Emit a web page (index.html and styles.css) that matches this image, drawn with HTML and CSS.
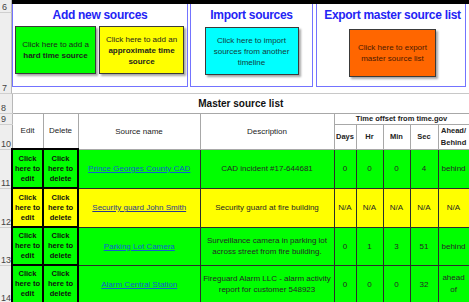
FILE: index.html
```html
<!DOCTYPE html>
<html lang="en">
<head>
  <meta charset="UTF-8">
  <title>Master source list</title>
  <link rel="stylesheet" href="styles.css">
</head>
<body>

<!-- top block: the three button panels -->
<div class="top">
  <div class="rh-col">
    <div class="rh-cell r6">6</div>
    <div class="rh-cell r7">7</div>
  </div>
  <div class="top-main">
    <div class="black-bar"></div>
    <div class="panels">
      <div class="panel p-add">
        <div class="panel-title">Add new sources</div>
        <div class="btn-row">
          <div class="shape green">Click here to add a<br><b>hard time source</b></div>
          <div class="shape yellow">Click here to add an<br><b>approximate time<br>source</b></div>
        </div>
      </div>
      <div class="panel p-imp">
        <div class="panel-title">Import sources</div>
        <div class="shape cyan">Click here to import<br>sources from another<br>timeline</div>
      </div>
      <div class="panel p-exp">
        <div class="panel-title">Export master source list</div>
        <div class="shape orange">Click here to export<br>master source list</div>
      </div>
    </div>
  </div>
</div>

<!-- master source list -->
<table class="sheet">
  <colgroup>
    <col class="c-rh">
    <col class="c-edit">
    <col class="c-del">
    <col class="c-name">
    <col class="c-desc">
    <col class="c-days">
    <col class="c-hr">
    <col class="c-min">
    <col class="c-sec">
    <col class="c-ahead">
  </colgroup>
  <tr class="r8">
    <td class="rh">8</td>
    <td colspan="9" class="list-title">Master source list</td>
  </tr>
  <tr class="r9">
    <td class="rh">9</td>
    <td rowspan="2" class="hd">Edit</td>
    <td rowspan="2" class="hd">Delete</td>
    <td rowspan="2" class="hd">Source name</td>
    <td rowspan="2" class="hd">Description</td>
    <td colspan="5" class="hd hd-b">Time offset from time.gov</td>
  </tr>
  <tr class="r10">
    <td class="rh">10</td>
    <td class="hd hd-b">Days</td>
    <td class="hd hd-b">Hr</td>
    <td class="hd hd-b">Min</td>
    <td class="hd hd-b">Sec</td>
    <td class="hd hd-b ahead">Ahead/<br>Behind</td>
  </tr>
  <tr class="row-a green">
    <td class="rh">11</td>
    <td class="act">Click<br>here to<br>edit</td>
    <td class="act">Click<br>here to<br>delete</td>
    <td><a href="#">Prince Georges County CAD</a></td>
    <td class="desc">CAD incident #17-644681</td>
    <td>0</td><td>0</td><td>0</td><td>4</td><td>behind</td>
  </tr>
  <tr class="row-a yellow">
    <td class="rh">12</td>
    <td class="act">Click<br>here to<br>edit</td>
    <td class="act">Click<br>here to<br>delete</td>
    <td><a href="#" class="visited">Security guard John Smith</a></td>
    <td class="desc">Security guard at fire building</td>
    <td>N/A</td><td>N/A</td><td>N/A</td><td>N/A</td><td>N/A</td>
  </tr>
  <tr class="row-b green">
    <td class="rh">13</td>
    <td class="act">Click<br>here to<br>edit</td>
    <td class="act">Click<br>here to<br>delete</td>
    <td><a href="#">Parking Lot Camera</a></td>
    <td class="desc">Surveillance camera in parking lot<br>across street from fire building.</td>
    <td>0</td><td>1</td><td>3</td><td>51</td><td>behind</td>
  </tr>
  <tr class="row-b green">
    <td class="rh">14</td>
    <td class="act">Click<br>here to<br>edit</td>
    <td class="act">Click<br>here to<br>delete</td>
    <td><a href="#">Alarm Central Station</a></td>
    <td class="desc">Fireguard Alarm LLC - alarm activity<br>report for customer 548923</td>
    <td>0</td><td>0</td><td>0</td><td>32</td><td class="two">ahead<br>of</td>
  </tr>
</table>

</body>
</html>
```

FILE: styles.css
```css
* {
  margin: 0;
  padding: 0;
  box-sizing: border-box;
}

body {
  font-family: "Liberation Sans", Arial, sans-serif;
  background-color: white;
  width: 469px;
  height: 302px;
  overflow: hidden;
  color: #222;
}

/* ---------- top panels ---------- */

.top {
  display: flex;
  height: 94px;
}

.rh-col {
  width: 12px;
  display: flex;
  flex-direction: column;
}

.rh-cell {
  background: #eeeeee;
  border-right: 1px solid #b8b8b8;
  border-bottom: 1px solid #cfcfcf;
  font-size: 9px;
  line-height: 10px;
  color: #444;
  padding-left: 2px;
  display: flex;
  align-items: flex-end;
}

.r6 {
  height: 13px;
}

.r7 {
  height: 81px;
}

.top-main {
  flex: 1;
  border-bottom: 1px solid #c8c8c8;
}

.black-bar {
  height: 4px;
  background: #000;
}

.panels {
  display: flex;
  height: 83px;
}

.panel {
  border: 1px solid #7373ff;
  border-top: none;
  display: flex;
  flex-direction: column;
  align-items: center;
}

.p-add {
  width: 176px;
  align-items: flex-start;
}

.p-imp {
  width: 123px;
  margin-left: 2px;
}

.p-exp {
  width: 150px;
  margin-left: 3px;
  padding-left: 3px;
}

.panel-title {
  height: 22px;
  line-height: 22px;
  font-size: 12px;
  font-weight: bold;
  letter-spacing: -0.3px;
  color: #2424f5;
  align-self: center;
  white-space: nowrap;
}

.btn-row {
  display: flex;
  gap: 3px;
  padding-left: 2px;
}

.shape {
  height: 48px;
  display: flex;
  flex-direction: column;
  justify-content: center;
  align-items: center;
  text-align: center;
  font-size: 8px;
  line-height: 11px;
  color: #1e1e1e;
  border: 1px solid #3a3a3a;
  box-shadow: 2px 2px 2px rgba(0, 0, 0, 0.35);
}

.shape.green {
  width: 81px;
  background: #00ff00;
}

.shape.yellow {
  width: 85px;
  background: #ffff00;
}

.shape.cyan {
  width: 94px;
  margin-top: 1px;
  background: #00ffff;
  color: #123c3c;
}

.shape.orange {
  width: 87px;
  margin-top: 3px;
  background: #ff6600;
  color: #4a1a00;
}

/* ---------- sheet table ---------- */

.sheet {
  border-collapse: collapse;
  table-layout: fixed;
  width: 469px;
}

.c-rh { width: 12px; }
.c-edit { width: 31px; }
.c-del { width: 35px; }
.c-name { width: 122px; }
.c-desc { width: 134px; }
.c-days { width: 22px; }
.c-hr { width: 27px; }
.c-min { width: 27px; }
.c-sec { width: 28px; }
.c-ahead { width: 31px; }

.sheet td {
  padding: 0;
  text-align: center;
  vertical-align: middle;
  font-size: 8px;
  overflow: hidden;
  white-space: nowrap;
}

.sheet td.rh {
  background: #eeeeee;
  border-right: 1px solid #b8b8b8;
  border-bottom: 1px solid #cfcfcf;
  vertical-align: bottom;
  text-align: left;
  font-size: 9px;
  line-height: 10px;
  color: #444;
  padding-left: 1px;
}

.r8 { height: 19px; }
.r9 { height: 11px; }
.r10 { height: 24px; }
.row-a { height: 39px; }
.row-b { height: 38px; }

.list-title {
  font-size: 10px !important;
  font-weight: bold;
  color: #111;
  border-bottom: 1px solid #a8a8a8;
}

.hd {
  border: 1px solid #a8a8a8;
  color: #222;
}

.hd-b {
  font-weight: bold;
  font-size: 7.5px !important;
}

.ahead {
  line-height: 12px;
}

.green td:not(.rh) {
  background: #00ff00;
}

.yellow td:not(.rh) {
  background: #ffff00;
}

.green td:not(.rh),
.yellow td:not(.rh) {
  border: 1px solid #2c2c2c;
  color: #262626;
}

.sheet td.act {
  border: 2px solid #000;
  font-weight: bold;
  font-size: 7.5px;
  line-height: 10px;
  color: #111;
}

.desc {
  line-height: 11.5px;
}

.two {
  line-height: 12px;
}

a {
  color: #1160d0;
  text-decoration: underline;
  font-size: 8px;
}

a.visited {
  color: #2c3a90;
}
```
